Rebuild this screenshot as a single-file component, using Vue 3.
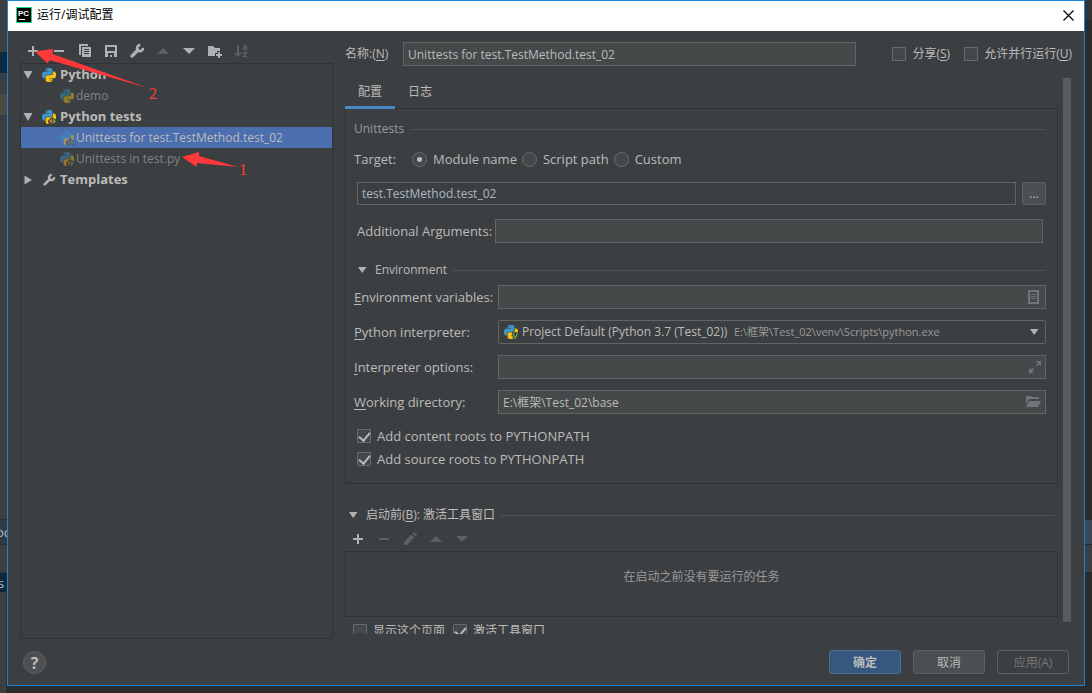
<script setup>
import { ref } from 'vue'

const tools = [
  { icon: 'plus', label: 'Add' },
  { icon: 'minus', label: 'Remove' },
  { icon: 'copy', label: 'Copy' },
  { icon: 'save', label: 'Save' },
  { icon: 'wrench', label: 'Edit templates' },
  { icon: 'up', label: 'Move up', off: true },
  { icon: 'down', label: 'Move down' },
  { icon: 'folder-add', label: 'New folder' },
  { icon: 'sort', label: 'Sort', off: true }
]

const rows = [
  { text: 'Python', icon: 'python', arrow: 'open', kind: 'group' },
  { text: 'demo', icon: 'python', kind: 'leaf' },
  { text: 'Python tests', icon: 'pytest', arrow: 'open', kind: 'group' },
  { text: 'Unittests for test.TestMethod.test_02', icon: 'pytest', kind: 'leaf', selected: true },
  { text: 'Unittests in test.py', icon: 'pytest', kind: 'leaf' },
  { text: 'Templates', icon: 'wrench', arrow: 'closed', kind: 'group' }
]

const taskTools = [
  { icon: 'plus', label: 'Add task' },
  { icon: 'minus', label: 'Remove task', off: true },
  { icon: 'pencil', label: 'Edit task', off: true },
  { icon: 'up', label: 'Task up', off: true },
  { icon: 'down', label: 'Task down', off: true }
]

const targets = ['Module name', 'Script path', 'Custom']
const target = ref('Module name')
const name = ref('Unittests for test.TestMethod.test_02')
const moduleName = ref('test.TestMethod.test_02')
const args = ref('')
const envVars = ref('')
const options = ref('')
const workDir = ref('E:\\框架\\Test_02\\base')
const share = ref(false)
const parallel = ref(false)
const contentRoots = ref(true)
const sourceRoots = ref(true)
const showPage = ref(false)
const activate = ref(true)
</script>

<template>
  <div class="desktop">
    <svg class="sprite" aria-hidden="true">
      <symbol id="plus" viewBox="0 0 16 16"><path fill="currentColor" d="M7 3h2v4h4v2H9v4H7V9H3V7h4z" /></symbol>
      <symbol id="minus" viewBox="0 0 16 16"><path fill="currentColor" d="M3 7h10v2H3z" /></symbol>
      <symbol id="copy" viewBox="0 0 16 16">
        <path fill="currentColor" d="M2 1h9v2H4v9H2z" />
        <path fill="currentColor" fill-rule="evenodd" d="M5 4h9v10H5zM7 6v1h5V6zM7 8v1h5V8zM7 10v1h5v-1z" />
      </symbol>
      <symbol id="save" viewBox="0 0 16 16">
        <path fill="currentColor" fill-rule="evenodd" d="M2 2h12v12H2zM4 4v4h8V4zM5 10v4h2v-2h2v2h2v-4z" />
      </symbol>
      <symbol id="wrench" viewBox="0 0 16 16">
        <path fill="none" stroke="currentColor" stroke-width="3.200" stroke-linecap="round" d="M3 13l6-6" />
        <path fill="none" stroke="currentColor" stroke-width="2.600" d="M11.300 2.200A3 3 0 1 0 13.900 4.800" />
      </symbol>
      <symbol id="up" viewBox="0 0 16 16"><path fill="currentColor" d="M2 11l6-6 6 6z" /></symbol>
      <symbol id="down" viewBox="0 0 16 16"><path fill="currentColor" d="M2 5h12l-6 6z" /></symbol>
      <symbol id="folder-add" viewBox="0 0 16 16">
        <path fill="currentColor" d="M1 3h5l2 2h5v3h-3v2H8v3H1z" />
        <path fill="currentColor" d="M11 9h2v2h2v2h-2v2h-2v-2H9v-2h2z" />
      </symbol>
      <symbol id="sort" viewBox="0 0 16 16">
        <path fill="currentColor" d="M4 2h2v8h3l-4 4-4-4h3z" />
        <path fill="none" stroke="currentColor" stroke-width="1.300" d="M10 2.600h2.500q1 0 1 1v3M13.500 4.500h-2q-1.300 0-1.300 1t1.300 1h2M10 9.600h3.500l-3.300 4h3.600" />
      </symbol>
      <symbol id="pencil" viewBox="0 0 16 16">
        <path fill="currentColor" d="M2 11l7.500-7.500 3 3L5 14H2zM10.500 2.500l1-1q.7-.7 1.400 0l1.600 1.600q.7.7 0 1.400l-1 1z" />
      </symbol>
      <symbol id="python" viewBox="0 0 24 24">
        <path fill="#3d97c9" d="M14.25.18l.9.2.73.26.59.3.45.32.34.34.25.34.16.33.1.3.04.26.02.2-.01.13V8.5l-.05.63-.13.55-.21.46-.26.38-.3.31-.33.25-.35.19-.35.14-.33.1-.3.07-.26.04-.21.02H8.77l-.69.05-.59.14-.5.22-.41.27-.33.32-.27.35-.2.36-.15.37-.1.35-.07.32-.04.27-.02.21v3.06H3.17l-.21-.03-.28-.07-.32-.12-.35-.18-.36-.26-.36-.36-.35-.46-.32-.59-.28-.73-.21-.88-.14-1.05-.05-1.23.06-1.22.16-1.04.24-.87.32-.71.36-.57.4-.44.42-.33.42-.24.4-.16.36-.1.32-.05.24-.01h.16l.06.01h8.16v-.83H6.18l-.01-2.75-.02-.37.05-.34.11-.31.17-.28.25-.26.31-.23.38-.2.44-.18.51-.15.58-.12.64-.1.71-.06.77-.04.84-.02 1.27.05zm-6.3 1.98l-.23.33-.08.41.08.41.23.34.33.22.41.09.41-.09.33-.22.23-.34.08-.41-.08-.41-.23-.33-.33-.22-.41-.09-.41.09z" />
        <path fill="#f5c211" d="M21.1 6.11l.28.06.32.12.35.18.36.27.36.35.35.47.32.59.28.73.21.88.14 1.04.05 1.23-.06 1.23-.16 1.04-.24.86-.32.71-.36.57-.4.45-.42.33-.42.24-.4.16-.36.09-.32.05-.24.02-.16-.01h-8.22v.82h5.84l.01 2.76.02.36-.05.34-.11.31-.17.29-.25.25-.31.24-.38.2-.44.17-.51.15-.58.13-.64.09-.71.07-.77.04-.84.01-1.27-.04-1.07-.14-.9-.2-.73-.25-.59-.3-.45-.33-.34-.34-.25-.34-.16-.33-.1-.3-.04-.25-.02-.2.01-.13v-5.34l.05-.64.13-.54.21-.46.26-.38.3-.32.33-.24.35-.2.35-.14.33-.1.3-.06.26-.04.21-.02.13-.01h5.84l.69-.05.59-.14.5-.21.41-.28.33-.32.27-.35.2-.36.15-.36.1-.35.07-.32.04-.28.02-.21V6.07h2.09l.14.01zm-6.47 14.25l-.23.33-.08.41.08.41.23.33.33.23.41.08.41-.08.33-.23.23-.33.08-.41-.08-.41-.23-.33-.33-.23-.41-.08-.41.08z" />
      </symbol>
      <symbol id="pytest" viewBox="0 0 24 24">
        <use href="#python" width="24" height="24" />
        <path fill="#3c3f41" d="M16 13h3l5 4v7H11.500L10 19z" />
        <path fill="#f26522" d="M17.500 14.500V24l-5.500-4.800z" />
        <path fill="#59b336" d="M19 14.500V24l5-4.800z" />
      </symbol>
      <symbol id="venv" viewBox="0 0 24 24">
        <use href="#python" width="24" height="24" />
        <path fill="#3c3f41" d="M13 12.500h11V24H16z" />
        <path fill="none" stroke="#62b543" stroke-width="2" d="M15.500 14l3.700 9L23 14" />
      </symbol>
      <symbol id="tri-down" viewBox="0 0 10 10"><path fill="currentColor" d="M1 2h8.500L5.200 8z" /></symbol>
      <symbol id="tree-open" viewBox="0 0 10 10"><path fill="currentColor" d="M.5 1h9L5 9z" /></symbol>
      <symbol id="tree-closed" viewBox="0 0 10 10"><path fill="currentColor" d="M1.500.5v9L9 5z" /></symbol>
      <symbol id="list" viewBox="0 0 16 16">
        <path fill="currentColor" fill-rule="evenodd" d="M2 1h11v14H2zM4 3v10h7V3z" />
        <path fill="currentColor" d="M5 5h5v1H5zM5 7h5v1H5zM5 9h5v1H5z" />
      </symbol>
      <symbol id="expand" viewBox="0 0 16 16">
        <path fill="currentColor" d="M10 2h5v5l-1.800-1.800-2.400 2.400-1.200-1.200L12 4zM3 9l1.800 1.800 2-2L8 10l-2 2 2 2H3z" />
      </symbol>
      <symbol id="folder" viewBox="0 0 16 16">
        <path fill="currentColor" d="M0 2h5l1 1h7v2H3L0 10zM3 7h12l-3 6H0z" />
      </symbol>
    </svg>

    <div class="strip left">
      <i class="plain a"></i><i class="navy b"></i><i class="plain b"></i><i class="sand b"></i>
      <i class="plain grow"></i>
      <i class="slate"><span>oc</span></i>
      <i class="plain c"></i>
      <i class="navy d"><span>s</span></i>
      <i class="plain e"></i>
    </div>

    <main class="dialog">
      <header class="titlebar">
        <svg class="logo" viewBox="0 0 16 16">
          <rect width="16" height="16" fill="#21d789" />
          <rect x="1" y="1" width="14" height="14" fill="#000" />
          <rect x="3" y="12" width="6" height="1" fill="#fff" />
          <text x="2" y="9">PC</text>
        </svg>
        <h1>运行/调试配置</h1>
        <button class="close" aria-label="Close">
          <svg viewBox="0 0 11 11"><path d="M.5.5l10 10M10.500.5l-10 10" stroke="#000" stroke-width="1.200" /></svg>
        </button>
      </header>

      <div class="body">
        <section class="side">
          <div class="toolbar">
            <button v-for="t in tools" :key="t.icon" :aria-label="t.label" :disabled="t.off">
              <svg><use :href="'#' + t.icon" /></svg>
            </button>
          </div>
          <ul class="tree">
            <li v-for="r in rows" :key="r.text" :class="[r.kind, { selected: r.selected }]">
              <svg v-if="r.arrow" class="arrow"><use :href="'#tree-' + r.arrow" /></svg>
              <svg class="pic"><use :href="'#' + r.icon" /></svg>
              <span>{{ r.text }}</span>
            </li>
          </ul>
        </section>

        <section class="main">
          <div class="namebar">
            <label for="name">名称:(<u>N</u>)</label>
            <input id="name" v-model="name" type="text" />
            <label class="check"><input v-model="share" type="checkbox" />分享(<u>S</u>)</label>
            <label class="check"><input v-model="parallel" type="checkbox" />允许并行运行(<u>U</u>)</label>
          </div>

          <div class="scroller">
            <div class="content">
              <nav class="tabs">
                <button class="active">配置</button>
                <button>日志</button>
              </nav>

              <div class="panel">
                <h2 class="rule muted">Unittests</h2>
                <div class="target">
                  <span class="caption">Target:</span>
                  <label v-for="t in targets" :key="t"><input v-model="target" type="radio" name="target" :value="t" />{{ t }}</label>
                </div>
                <div class="module">
                  <input v-model="moduleName" class="clear" type="text" aria-label="Module name" />
                  <button class="more">...</button>
                </div>
                <div class="args">
                  <label for="args">Additional Arguments:</label>
                  <input id="args" v-model="args" type="text" />
                </div>
                <h2 class="rule fold"><svg><use href="#tri-down" /></svg>Environment</h2>

                <div class="form">
                  <label for="env"><u>E</u>nvironment variables:</label>
                  <div class="field">
                    <input id="env" v-model="envVars" type="text" />
                    <svg><use href="#list" /></svg>
                  </div>
                  <label for="interp"><u>P</u>ython interpreter:</label>
                  <div class="field combo">
                    <svg class="venv"><use href="#venv" /></svg>
                    <select id="interp"><option>Project Default (Python 3.7 (Test_02))</option></select>
                    <span>E:\框架\Test_02\venv\Scripts\python.exe</span>
                    <svg class="drop"><use href="#tri-down" /></svg>
                  </div>
                  <label for="opts"><u>I</u>nterpreter options:</label>
                  <div class="field">
                    <input id="opts" v-model="options" type="text" />
                    <svg><use href="#expand" /></svg>
                  </div>
                  <label for="dir"><u>W</u>orking directory:</label>
                  <div class="field">
                    <input id="dir" v-model="workDir" type="text" />
                    <svg><use href="#folder" /></svg>
                  </div>
                </div>

                <div class="roots">
                  <label class="check"><input v-model="contentRoots" type="checkbox" />Add content roots to PYTHONPATH</label>
                  <label class="check"><input v-model="sourceRoots" type="checkbox" />Add source roots to PYTHONPATH</label>
                </div>
              </div>

              <h2 class="rule fold before"><svg><use href="#tri-down" /></svg><span>启动前(<u>B</u>): 激活工具窗口</span></h2>
              <div class="toolbar tasks">
                <button v-for="t in taskTools" :key="t.icon" :aria-label="t.label" :disabled="t.off">
                  <svg><use :href="'#' + t.icon" /></svg>
                </button>
              </div>
              <div class="empty">在启动之前没有要运行的任务</div>
              <div class="after">
                <label class="check"><input v-model="showPage" type="checkbox" />显示这个页面</label>
                <label class="check"><input v-model="activate" type="checkbox" />激活工具窗口</label>
              </div>
            </div>
            <div class="thumb"></div>
          </div>
        </section>
      </div>

      <footer>
        <button class="help" aria-label="Help">?</button>
        <button class="btn primary">确定</button>
        <button class="btn">取消</button>
        <button class="btn ghost" disabled>应用(A)</button>
      </footer>
    </main>

    <div class="strip right">
      <i class="top"></i><i class="grow"></i><i class="blue"></i><i class="gray"></i><i class="tail"></i>
    </div>

    <svg class="notes" width="260" height="190">
      <path d="M35 51.500L53 49l-.5 5L148 88 49.500 60l-2 3.500z" />
      <path d="M182 157l17-5v4l39 11-41-4-.5 4z" />
      <text x="149" y="99">2</text>
      <text x="239" y="175">1</text>
    </svg>
  </div>
</template>

<style>
body {
  background: #2b2b2b;
}
</style>

<style scoped>
.desktop {
  position: relative;
  display: grid;
  grid-template-rows: minmax(0, 1fr);
  grid-template-columns: 7px minmax(0, 1fr) 7px;
  height: 100vh;
  overflow: hidden;
  background: #2b2b2b;
  color: #bbbbbb;
  font: 13px/20px "Open Sans", "Noto Sans CJK SC", sans-serif;
}
.desktop * {
  box-sizing: border-box;
}
.sprite {
  position: absolute;
  width: 0;
  height: 0;
}
svg {
  display: block;
  flex: none;
}
button,
input,
select {
  margin: 0;
  padding: 0;
  border: 0;
  outline: 0;
  background: none;
  color: inherit;
  font: inherit;
}
h1,
h2,
ul {
  margin: 0;
  padding: 0;
  font-weight: 400;
  list-style: none;
}
u {
  text-underline-offset: 2px;
}

/* Slivers of the IDE window behind the dialog */
.strip {
  display: flex;
  flex-direction: column;
  overflow: hidden;
}
.strip i {
  flex: none;
  overflow: hidden;
  font-style: normal;
}
.strip .grow {
  flex: 1;
}
.plain { background: #3c3f41; }
.navy { background: #0d293e; }
.sand { background: #4e4a3f; }
.a { height: 52px; }
.b { height: 21px; }
.c { height: 28px; border-bottom: 1px solid #323232; }
.d { height: 19px; margin-right: 1px; }
.e { height: 101px; margin-right: 1px; }
.strip .slate {
  height: 26px;
  padding-top: 2px;
  border-top: 1px solid #2b2b2b;
  border-bottom: 1px solid #2b2b2b;
  background: #323a45;
}
.strip span {
  display: block;
  margin-left: -4px;
}
.strip .d span {
  margin-left: -2px;
}
.top { height: 20px; background: #313335; }
.blue { height: 24px; background: #3a4656; }
.gray { height: 28px; border-top: 1px solid #2b2b2b; background: #3c3f41; }
.tail { height: 121px; }

.dialog {
  display: flex;
  flex-direction: column;
  min-height: 0;
  margin-bottom: 7px;
  border: 1px solid #1883d7;
  background: #3c3f41;
}
.titlebar {
  display: flex;
  flex: none;
  align-items: center;
  height: 30px;
  padding: 0 10px 2px 8px;
  background: #fff;
  color: #000;
}
.titlebar h1 {
  margin-left: 5px;
  font-size: 12px;
}
.logo {
  width: 16px;
  height: 16px;
}
.logo text {
  fill: #fff;
  font: bold 8px "Liberation Sans", sans-serif;
}
.close {
  margin-left: auto;
}
.close svg {
  width: 11px;
  height: 11px;
}

.body {
  display: grid;
  flex: 1;
  grid-template-rows: minmax(0, 1fr);
  grid-template-columns: 313px minmax(0, 1fr);
  gap: 12px;
  min-height: 0;
  padding: 0 12px;
}
.side {
  display: flex;
  flex-direction: column;
}
.toolbar {
  display: flex;
  flex: none;
  height: 24px;
  color: #afb1b3;
}
.side .toolbar {
  margin-top: 8px;
}
.toolbar button {
  display: grid;
  place-items: center;
  width: 26px;
}
.toolbar button:disabled {
  color: #5e6162;
}
.toolbar svg {
  width: 16px;
  height: 16px;
}
.tree {
  flex: 1;
  border: 1px solid #323232;
}
.tree li {
  display: flex;
  align-items: center;
  height: 21px;
  padding-left: 2px;
  line-height: 21px;
  white-space: nowrap;
}
.tree .arrow {
  width: 10px;
  height: 10px;
  margin-right: 9px;
  color: #afb1b3;
}
.tree .pic {
  width: 14px;
  height: 14px;
  color: #afb1b3;
}
.group span {
  margin-left: 4px;
  font-weight: 700;
}
.tree .leaf {
  padding-left: 39px;
  color: #808284;
  font-size: 12px;
}
.leaf .pic {
  opacity: 0.45;
}
.leaf span {
  margin-left: 2px;
}
.tree .selected {
  background: #4b6eaf;
  color: #bbbbbb;
}

.main {
  display: flex;
  flex-direction: column;
  min-width: 0;
  min-height: 0;
  padding-bottom: 5px;
}
.namebar {
  display: flex;
  flex: none;
  align-items: center;
  margin: 11px 0 10px;
  font-size: 12px;
}
.namebar > label:first-child {
  width: 58px;
}
.namebar .check {
  margin-left: 14px;
}
.namebar .check:nth-of-type(2) {
  margin-left: 36px;
}
input[type='text'] {
  flex: 1;
  min-width: 0;
  height: 24px;
  padding: 0 4px;
  border: 1px solid #646464;
  background: #45494a;
  font-size: 12px;
}
input.clear[type='text'] {
  height: 23px;
  background: none;
  color: #a9b7c6;
}
.check {
  display: flex;
  align-items: center;
  white-space: nowrap;
}
input[type='checkbox'] {
  appearance: none;
  display: grid;
  place-items: center;
  width: 14px;
  height: 14px;
  margin-right: 6px;
  border: 1px solid #6b6b6b;
  border-radius: 1px;
  background: #43494a;
}
input[type='checkbox']:checked::after {
  content: '';
  width: 5px;
  height: 9px;
  margin-bottom: 4px;
  border: solid #bbbbbb;
  border-width: 0 2px 2px 0;
  transform: rotate(40deg);
}
.scroller {
  display: flex;
  flex: 1;
  gap: 5px;
  min-height: 0;
  padding-right: 1px;
  overflow: hidden;
}
.content {
  flex: 1;
  min-width: 0;
}
.thumb {
  width: 8px;
  margin: 2px 0 12px;
  background: #595b5d;
}
.tabs {
  display: flex;
  height: 33px;
  margin-bottom: -1px;
}
.tabs button {
  width: 50px;
  padding-top: 1px;
  border-bottom: 3px solid transparent;
  font-size: 12px;
}
.tabs .active {
  border-color: #4a88c7;
  z-index: 1;
}
.panel {
  padding: 10px 11px 14px 8px;
  border: 1px solid #323232;
}
.rule {
  display: flex;
  align-items: center;
  gap: 6px;
  height: 20px;
  font-size: 12px;
}
.rule::after {
  content: '';
  flex: 1;
  height: 1px;
  background: #515151;
}
.rule svg {
  width: 10px;
  height: 10px;
  color: #afb1b3;
}
.muted {
  color: #999999;
}
.target {
  display: flex;
  align-items: center;
  margin-top: 10px;
}
.target .caption {
  width: 58px;
}
.target label {
  display: flex;
  align-items: center;
  margin-right: 5px;
}
input[type='radio'] {
  appearance: none;
  width: 15px;
  height: 15px;
  margin-right: 6px;
  border: 1px solid #6b6b6b;
  border-radius: 50%;
  background: #43494a;
}
input[type='radio']:checked {
  background: radial-gradient(circle, #bbbbbb 2px, #43494a 3px);
}
.module {
  display: flex;
  gap: 6px;
  margin: 13px 0 14px 3px;
}
.more {
  width: 24px;
  height: 23px;
  border: 1px solid #5e6060;
  border-radius: 2px;
  background: #4c5052;
  font-size: 12px;
}
.args {
  display: flex;
  align-items: center;
  margin: 0 3px;
}
.args label {
  width: 138px;
}
.fold {
  margin: 17px 0 5px 3px;
}
.fold svg {
  margin-right: 2px;
}
.form {
  display: grid;
  grid-template-columns: 144px minmax(0, 1fr);
  row-gap: 11px;
  align-items: center;
}
.field {
  display: grid;
  grid-template-columns: minmax(0, 1fr) 24px;
  align-items: center;
}
.field input[type='text'] {
  grid-area: 1 / 1 / 2 / 3;
  padding-right: 24px;
}
.field svg {
  grid-area: 1 / 2;
  width: 16px;
  height: 16px;
  margin-left: 4px;
  color: #6e767b;
}
.combo {
  display: flex;
  height: 24px;
  padding: 0 6px 0 5px;
  border: 1px solid #646464;
  border-radius: 2px;
  font-size: 12px;
  white-space: nowrap;
}
.combo svg.venv {
  width: 14px;
  height: 14px;
  margin: 0 4px 0 0;
}
.combo select {
  appearance: none;
}
.combo span {
  margin-left: 6px;
  color: #999999;
  font-size: 11px;
}
.combo svg.drop {
  width: 10px;
  height: 10px;
  margin-left: auto;
  color: #afb1b3;
}
.roots {
  display: grid;
  gap: 3px;
  margin: 12px 0 0 3px;
}
.before {
  margin: 21px 3px 0;
}
.tasks {
  margin-top: 2px;
}
.empty {
  height: 66px;
  padding-top: 15px;
  border: 1px solid #323232;
  color: #999999;
  font-size: 12px;
  text-align: center;
}
.after {
  display: flex;
  gap: 8px;
  padding: 4px 8px 0;
  font-size: 12px;
}
footer {
  display: flex;
  flex: none;
  align-items: flex-start;
  gap: 12px;
  height: 46px;
  padding: 11px 15px 0;
}
.help {
  width: 23px;
  height: 23px;
  margin: 1px auto 0 0;
  border: 1px solid #5e6060;
  border-radius: 50%;
  background: #4c5052;
  font-size: 16px;
  font-weight: 700;
  line-height: 20px;
}
.btn {
  width: 72px;
  height: 24px;
  padding-top: 1px;
  border: 1px solid #5e6060;
  border-radius: 3px;
  background: #4c5052;
  font-size: 12px;
}
.primary {
  border-color: #4c708c;
  background: #365880;
  font-weight: 700;
}
.ghost {
  background: none;
  color: #777777;
}

/* Red pointers laid over the dialog */
.notes {
  position: absolute;
  top: 0;
  left: 0;
  pointer-events: none;
  fill: #ff3939;
}
.notes text {
  font: 16px "Liberation Serif", serif;
}
</style>
